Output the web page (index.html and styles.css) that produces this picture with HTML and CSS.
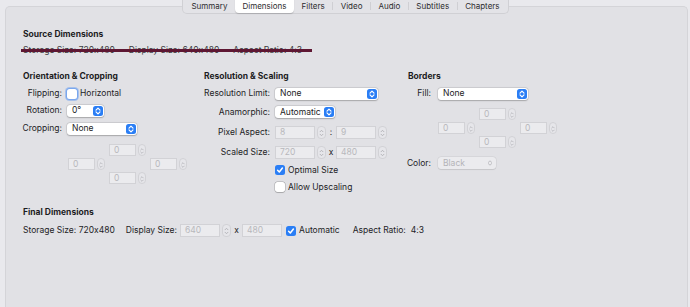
FILE: index.html
```html
<!DOCTYPE html>
<html>
<head>
<meta charset="utf-8">
<link rel="stylesheet" href="styles.css">
</head>
<body>
<div class="window">
  <div class="tabs">
    <div class="seg">
      <span class="tab">Summary</span>
      <span class="tab sel">Dimensions</span>
      <span class="tab">Filters</span>
      <span class="sep"></span>
      <span class="tab">Video</span>
      <span class="sep"></span>
      <span class="tab">Audio</span>
      <span class="sep"></span>
      <span class="tab">Subtitles</span>
      <span class="sep"></span>
      <span class="tab">Chapters</span>
    </div>
  </div>
  <div class="panel">
    <section class="source">
      <h3>Source Dimensions</h3>
      <div class="struck"><span>Storage Size: 720x480</span><span>Display Size: 640x480</span><span>Aspect Ratio: 4:3</span></div>
    </section>

    <div class="cols">
      <section class="col orient">
        <h3>Orientation &amp; Cropping</h3>
        <div class="form f-orient">
          <label class="lbl r17">Flipping:</label>
          <div class="ctl r17"><span class="check focus"></span><span class="ctext">Horizontal</span></div>
          <label class="lbl r17">Rotation:</label>
          <div class="ctl r17"><span class="popup w37"><span class="pv">0°</span><span class="pbtn"><svg viewBox="0 0 10 10"><path d="M3 4.2 5 2.2 7 4.2M3 5.8 5 7.8 7 5.8"/></svg></span></span></div>
          <label class="lbl r19">Cropping:</label>
          <div class="ctl r19"><span class="popup w70"><span class="pv">None</span><span class="pbtn"><svg viewBox="0 0 10 10"><path d="M3 4.2 5 2.2 7 4.2M3 5.8 5 7.8 7 5.8"/></svg></span></span></div>
          <div></div>
          <div class="quad crop">
            <div class="spin q-top"><span class="field">0</span><span class="step"><svg viewBox="0 0 8 12"><path d="M2.3 4.6 4 2.9 5.7 4.6M2.3 7.4 4 9.1 5.7 7.4"/></svg></span></div>
            <div class="spin q-left"><span class="field">0</span><span class="step"><svg viewBox="0 0 8 12"><path d="M2.3 4.6 4 2.9 5.7 4.6M2.3 7.4 4 9.1 5.7 7.4"/></svg></span></div>
            <div class="spin q-right"><span class="field">0</span><span class="step"><svg viewBox="0 0 8 12"><path d="M2.3 4.6 4 2.9 5.7 4.6M2.3 7.4 4 9.1 5.7 7.4"/></svg></span></div>
            <div class="spin q-bottom"><span class="field">0</span><span class="step"><svg viewBox="0 0 8 12"><path d="M2.3 4.6 4 2.9 5.7 4.6M2.3 7.4 4 9.1 5.7 7.4"/></svg></span></div>
          </div>
        </div>
      </section>

      <section class="col res">
        <h3>Resolution &amp; Scaling</h3>
        <div class="form f-res">
          <label class="lbl r17">Resolution Limit:</label>
          <div class="ctl r17"><span class="popup w103"><span class="pv">None</span><span class="pbtn"><svg viewBox="0 0 10 10"><path d="M3 4.2 5 2.2 7 4.2M3 5.8 5 7.8 7 5.8"/></svg></span></span></div>
          <label class="lbl r20">Anamorphic:</label>
          <div class="ctl r20"><span class="popup w60"><span class="pv">Automatic</span><span class="pbtn"><svg viewBox="0 0 10 10"><path d="M3 4.2 5 2.2 7 4.2M3 5.8 5 7.8 7 5.8"/></svg></span></span></div>
          <label class="lbl r20">Pixel Aspect:</label>
          <div class="ctl r20">
            <div class="spin wide"><span class="field">8</span><span class="step"><svg viewBox="0 0 8 12"><path d="M2.3 4.6 4 2.9 5.7 4.6M2.3 7.4 4 9.1 5.7 7.4"/></svg></span></div>
            <span class="between">:</span>
            <div class="spin wide"><span class="field">9</span><span class="step"><svg viewBox="0 0 8 12"><path d="M2.3 4.6 4 2.9 5.7 4.6M2.3 7.4 4 9.1 5.7 7.4"/></svg></span></div>
          </div>
          <label class="lbl r20">Scaled Size:</label>
          <div class="ctl r20">
            <div class="spin wide"><span class="field">720</span><span class="step"><svg viewBox="0 0 8 12"><path d="M2.3 4.6 4 2.9 5.7 4.6M2.3 7.4 4 9.1 5.7 7.4"/></svg></span></div>
            <span class="between">x</span>
            <div class="spin wide"><span class="field">480</span><span class="step"><svg viewBox="0 0 8 12"><path d="M2.3 4.6 4 2.9 5.7 4.6M2.3 7.4 4 9.1 5.7 7.4"/></svg></span></div>
          </div>
          <div class="r16"></div>
          <div class="ctl r16"><span class="check on"><svg viewBox="0 0 10 10"><path d="M2.6 5.3 4.3 7 7.4 3"/></svg></span><span class="ctext">Optimal Size</span></div>
          <div class="r18"></div>
          <div class="ctl r18"><span class="check"></span><span class="ctext">Allow Upscaling</span></div>
        </div>
      </section>

      <section class="col borders">
        <h3>Borders</h3>
        <div class="form f-bord">
          <label class="lbl r17">Fill:</label>
          <div class="ctl r17"><span class="popup w90"><span class="pv">None</span><span class="pbtn"><svg viewBox="0 0 10 10"><path d="M3 4.2 5 2.2 7 4.2M3 5.8 5 7.8 7 5.8"/></svg></span></span></div>
          <div></div>
          <div class="quad bord">
            <div class="spin q-top"><span class="field">0</span><span class="step"><svg viewBox="0 0 8 12"><path d="M2.3 4.6 4 2.9 5.7 4.6M2.3 7.4 4 9.1 5.7 7.4"/></svg></span></div>
            <div class="spin q-left"><span class="field">0</span><span class="step"><svg viewBox="0 0 8 12"><path d="M2.3 4.6 4 2.9 5.7 4.6M2.3 7.4 4 9.1 5.7 7.4"/></svg></span></div>
            <div class="spin q-right"><span class="field">0</span><span class="step"><svg viewBox="0 0 8 12"><path d="M2.3 4.6 4 2.9 5.7 4.6M2.3 7.4 4 9.1 5.7 7.4"/></svg></span></div>
            <div class="spin q-bottom"><span class="field">0</span><span class="step"><svg viewBox="0 0 8 12"><path d="M2.3 4.6 4 2.9 5.7 4.6M2.3 7.4 4 9.1 5.7 7.4"/></svg></span></div>
          </div>
          <label class="lbl r14">Color:</label>
          <div class="ctl r14"><span class="popup w58 off"><span class="pv">Black</span><span class="pbtn"><svg viewBox="0 0 10 10"><path d="M3.3 4.4 5 2.8 6.7 4.4M3.3 5.6 5 7.2 6.7 5.6"/></svg></span></span></div>
        </div>
      </section>
    </div>

    <section class="final">
      <h3>Final Dimensions</h3>
      <div class="frow">
        <span class="storage">Storage Size: 720x480</span>
        <span class="dlabel">Display Size:</span>
        <div class="spin wide"><span class="field">640</span><span class="step"><svg viewBox="0 0 8 12"><path d="M2.3 4.6 4 2.9 5.7 4.6M2.3 7.4 4 9.1 5.7 7.4"/></svg></span></div>
        <span class="between fx">x</span>
        <span class="field solo">480</span>
        <span class="check on"><svg viewBox="0 0 10 10"><path d="M2.6 5.3 4.3 7 7.4 3"/></svg></span><span class="ctext auto">Automatic</span>
        <span class="alabel">Aspect Ratio:</span>
        <span class="aval">4:3</span>
      </div>
    </section>
  </div>
</div>
</body>
</html>
```

FILE: styles.css
```css
* { box-sizing: border-box; margin: 0; padding: 0; }

html, body { height: 307px; overflow: hidden; }

body {
  background: #e9e9ed;
  font-family: Inter, "Noto Sans", sans-serif;
  font-feature-settings: "calt" 0;
  font-size: 8.5px;
  line-height: 11px;
  color: #232325;
}

.window { padding: 0 2px 0 5px; height: 100%; }

/* ---------- tabs ---------- */
.tabs {
  display: flex;
  justify-content: center;
  position: relative;
  z-index: 1;
  margin-bottom: -8px;
  padding-right: 2px;
}
.seg {
  display: flex;
  align-items: center;
  height: 14px;
  background: #e3e3e7;
  border: 1px solid #d0d0d4;
  border-top: none;
  border-radius: 0 0 5px 5px;
  padding: 0 1px 1px;
}
.tab {
  padding: 0 7.5px;
  height: 13px;
  line-height: 13px;
  color: #2c2c2e;
  font-size: 8px;
}
.tab.sel {
  background: #fff;
  border-radius: 0 0 4px 4px;
  box-shadow: 0 0.5px 1px rgba(0,0,0,0.18);
}
.sep { width: 1px; height: 8px; background: #cfcfd3; }

/* ---------- panel ---------- */
.panel {
  background: #e1e1e5;
  border: 1px solid #d4d4d8;
  border-bottom: none;
  border-radius: 5px 5px 0 0;
  height: 301px;
  padding: 22px 0 0 17px;
}

h3 { font-size: 8.5px; font-weight: 700; line-height: 11px; color: #1d1d1f; }

.struck {
  display: inline-flex;
  gap: 14px;
  margin-top: 4.5px;
  position: relative;
  color: #3a3a3c;
}
.struck::after {
  content: "";
  position: absolute;
  left: -2px;
  right: -10px;
  top: 4px;
  height: 3px;
  background: #5e1733;
}

.cols {
  display: grid;
  grid-template-columns: 181px 204px 1fr;
  margin-top: 15.5px;
}

.form { display: grid; column-gap: 5px; margin-top: 3px; }
.f-orient { grid-template-columns: 39px auto; }
.f-res { grid-template-columns: 66px auto; column-gap: 5px; }
.f-bord { grid-template-columns: 23px auto; column-gap: 7px; }

.lbl { justify-self: end; display: flex; align-items: center; white-space: nowrap; }
.ctl { display: flex; align-items: center; }
.r14 { height: 14px; }
.r16 { height: 16px; }
.r17 { height: 17px; }
.r18 { height: 18px; }
.r19 { height: 19px; }
.r20 { height: 20px; }

/* popup buttons */
.popup {
  display: flex;
  align-items: center;
  height: 12px;
  background: #fff;
  border-radius: 3px;
  box-shadow: 0 0 0 0.5px rgba(0,0,0,0.12), 0 0.5px 1.5px rgba(0,0,0,0.22);
  padding: 0 1px 0 5px;
}
.pv { flex: 1; white-space: nowrap; }
.pbtn {
  width: 10px;
  height: 10px;
  border-radius: 2.5px;
  background: #2a7ef5;
  display: flex;
}
.pbtn svg { width: 10px; height: 10px; fill: none; stroke: #fff; stroke-width: 1.2; stroke-linecap: round; stroke-linejoin: round; }
.popup.off { background: #ebebee; color: #b4b4b8; box-shadow: 0 0 0 0.5px rgba(0,0,0,0.08), 0 0.5px 1px rgba(0,0,0,0.08); }
.popup.off .pbtn { background: transparent; }
.popup.off .pbtn svg { stroke: #b8b8bc; stroke-width: 0.9; }
.w37 { width: 37px; }
.w58 { width: 58px; }
.w60 { width: 60px; }
.w70 { width: 70px; }
.w90 { width: 90px; }
.w103 { width: 103px; }

/* checkbox */
.check {
  width: 10px;
  height: 10px;
  border-radius: 2.5px;
  background: #fff;
  box-shadow: 0 0 0 0.5px rgba(0,0,0,0.25), 0 0.5px 1px rgba(0,0,0,0.15);
  display: inline-flex;
  flex: none;
}
.check.focus { box-shadow: 0 0 0 1px #7aa7ee, 0 0 0 2px rgba(122,167,238,0.55); }
.check.on { background: #2a7ef5; box-shadow: none; }
.check svg { width: 10px; height: 10px; fill: none; stroke: #fff; stroke-width: 1.5; stroke-linecap: round; stroke-linejoin: round; }
.ctext { margin-left: 3px; white-space: nowrap; }

/* spinners */
.spin { display: flex; align-items: center; gap: 2px; }
.field {
  display: flex;
  align-items: center;
  width: 27px;
  height: 12px;
  padding-left: 4px;
  background: #ebebee;
  border: 0.5px solid #d2d2d6;
  color: #b8b8bc;
}
.step {
  width: 8px;
  height: 13px;
  border-radius: 4px;
  border: 0.5px solid #d2d2d6;
  background: #e6e6ea;
  display: flex;
}
.step svg { width: 8px; height: 12px; fill: none; stroke: #a8a8ae; stroke-width: 0.9; stroke-linecap: round; stroke-linejoin: round; }
.spin.wide .field { width: 40px; height: 13px; }
.spin.wide .step { width: 9px; }
.between { width: 10px; text-align: center; flex: none; }

.quad {
  display: grid;
  grid-template-columns: repeat(3, 37px);
  grid-template-rows: repeat(3, 12px);
  column-gap: 4px;
  row-gap: 2px;
}
.quad .step { height: 12px; }
.crop { margin-top: 6px; margin-left: 1px; row-gap: 2px; }
.bord { margin-top: 6px; margin-bottom: 8px; }
.q-top { grid-area: 1 / 2; }
.q-left { grid-area: 2 / 1; }
.q-right { grid-area: 2 / 3; }
.q-bottom { grid-area: 3 / 2; }

/* final */
.final { margin-top: 10.5px; }
.frow { display: flex; align-items: center; height: 16px; margin-top: 5px; white-space: nowrap; }
.storage { flex: none; margin-right: 11px; }
.dlabel { flex: none; margin-right: 3px; }
.frow .between.fx { width: 11px; }
.field.solo { width: 40px; height: 13px; margin-right: 4px; }
.frow .ctext.auto { margin-right: 13px; }
.alabel { flex: none; margin-right: 5px; }
```
